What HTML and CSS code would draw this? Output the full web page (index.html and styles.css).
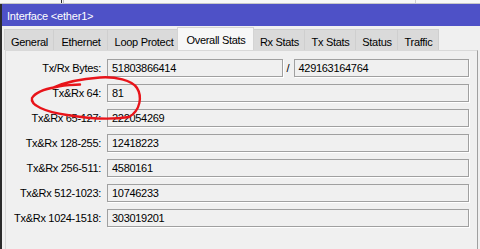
FILE: index.html
```html
<!DOCTYPE html>
<html lang="en">
<head>
    <meta charset="UTF-8">
    <title>Interface &lt;ether1&gt;</title>
    <link rel="stylesheet" href="styles.css">
</head>
<body>

    <!-- lo que queda detrás de la ventana -->
    <div class="fondo"></div>

    <div class="ventana">
        <div class="titulo">Interface &lt;ether1&gt;</div>

        <div class="pestanas">
            <div class="pestana w-general">General</div>
            <div class="pestana w-ethernet">Ethernet</div>
            <div class="pestana w-loop">Loop Protect</div>
            <div class="pestana activa w-overall">Overall Stats</div>
            <div class="pestana w-rx">Rx Stats</div>
            <div class="pestana w-tx">Tx Stats</div>
            <div class="pestana w-status">Status</div>
            <div class="pestana w-traffic">Traffic</div>
        </div>

        <div class="panel">
            <div class="fila">
                <span class="etiqueta">Tx/Rx Bytes:</span>
                <div class="par">
                    <div class="campo">51803866414</div>
                    <span class="barra">/</span>
                    <div class="campo">429163164764</div>
                </div>
            </div>
            <div class="fila">
                <span class="etiqueta">Tx&amp;Rx 64:</span>
                <div class="campo">81</div>
            </div>
            <div class="fila">
                <span class="etiqueta">Tx&amp;Rx 65-127:</span>
                <div class="campo">222054269</div>
            </div>
            <div class="fila">
                <span class="etiqueta">Tx&amp;Rx 128-255:</span>
                <div class="campo">12418223</div>
            </div>
            <div class="fila">
                <span class="etiqueta">Tx&amp;Rx 256-511:</span>
                <div class="campo">4580161</div>
            </div>
            <div class="fila">
                <span class="etiqueta">Tx&amp;Rx 512-1023:</span>
                <div class="campo">10746233</div>
            </div>
            <div class="fila">
                <span class="etiqueta">Tx&amp;Rx 1024-1518:</span>
                <div class="campo">303019201</div>
            </div>
        </div>
    </div>

    <!-- círculo rojo dibujado a mano -->
    <svg class="marca" width="480" height="249" viewBox="0 0 480 249">
        <path d="M 80 84.5 C 70 85, 63 85, 56 87 C 45 89, 35 93, 32 98 C 30 105, 45 112, 67 115 C 85 118, 110 120, 129 117 C 141 110, 142 96, 137 88 C 132 80, 115 76.5, 100 77.5 C 85 78.5, 65 82, 52 88"
              fill="none" stroke="#e8141a" stroke-width="2.4" stroke-linecap="round"/>
    </svg>

</body>
</html>
```

FILE: styles.css
```css
body {
    margin: 0;
    padding: 0;
    width: 480px;
    height: 249px;
    overflow: hidden;
    position: relative;
    background-color: #f0f0f0;
    font-family: "Liberation Sans", Arial, sans-serif;
    font-size: 11px;
    letter-spacing: -0.3px;
    color: #000;
}
.fondo {
    height: 3px;
    border-bottom: 1px solid #c8c8c8;
    background:
        linear-gradient(to right, transparent 61px, #2b2b2b 61px, #2b2b2b 62px, transparent 62px),
        linear-gradient(to right, transparent 63px, #bdbdbd 63px, #bdbdbd 64px, transparent 64px),
        linear-gradient(to right, transparent 415px, #cfcfcf 415px, #cfcfcf 416px, transparent 416px),
        #f7f7f7;
}
.ventana {
    height: 245px;
    border-left: 2px solid #2b2b2b;
}
.titulo {
    height: 22px;
    box-sizing: border-box;
    padding: 3px 0 0 5px;
    line-height: 19px;
    background-color: #4e51c7;
    color: #fff;
    letter-spacing: -0.2px;
}
/* Pestañas */
.pestanas {
    display: flex;
    align-items: flex-end;
    height: 24px;
    box-sizing: border-box;
    padding: 1px 0 0 2px;
}
.pestana {
    height: 21px;
    box-sizing: border-box;
    padding: 4px 0 0 1px;
    line-height: 16px;
    text-align: center;
    background-color: #dadada;
    border: 1px solid #cfcfcf;
    border-bottom: none;
    margin-right: -1px;
    white-space: nowrap;
}
.pestana.activa {
    height: 23px;
    padding-top: 4px;
    background-color: #f7f7f7;
    border-color: #d4d4d4;
    margin-left: -2px;
    margin-right: -1px;
    position: relative;
    z-index: 1;
}
.w-general { width: 50px; }
.w-ethernet { width: 55px; }
.w-loop { width: 73px; }
.w-overall { width: 77px; }
.w-rx { width: 52px; }
.w-tx { width: 52px; }
.w-status { width: 43px; }
.w-traffic { width: 42px; }
/* Panel de datos */
.panel {
    margin-left: 3px;
    width: 473px;
    height: 199px;
    box-sizing: border-box;
    padding: 8px 8px 0 0;
    border-top: 1px solid #d9d9d9;
    border-left: 1px solid #d9d9d9;
    border-right: 1px solid #a0a0a0;
}
.fila {
    display: grid;
    grid-template-columns: 95px 1fr;
    column-gap: 6px;
    align-items: center;
    height: 18px;
    margin-bottom: 7px;
}
.etiqueta {
    text-align: right;
    line-height: 18px;
    white-space: nowrap;
}
.campo {
    height: 18px;
    box-sizing: border-box;
    padding-left: 4px;
    line-height: 16px;
    border: 1px solid #a0a0a0;
    box-shadow: 1px 1px 0 #fff;
}
.par {
    display: flex;
}
.par .campo {
    flex: 1;
}
.barra {
    width: 11px;
    text-align: center;
    line-height: 18px;
}
.marca {
    position: absolute;
    left: 0;
    top: 0;
    pointer-events: none;
}
```
